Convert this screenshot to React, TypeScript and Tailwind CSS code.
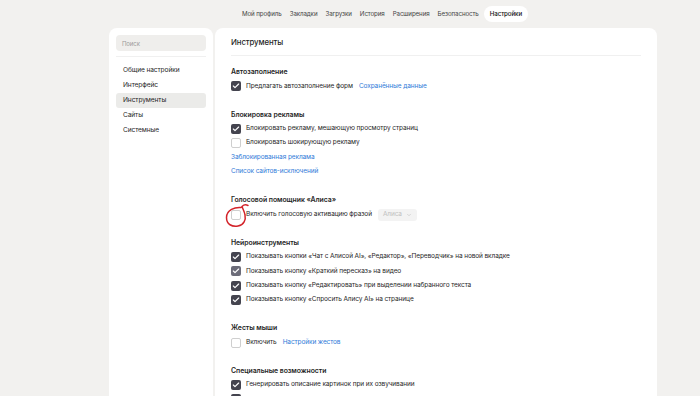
import { Check, ChevronDown } from "lucide-react"

const nav = ["Мой профиль", "Закладки", "Загрузки", "История", "Расширения", "Безопасность", "Настройки"]
const side = ["Общие настройки", "Интерфейс", "Инструменты", "Сайты", "Системные"]

function Box({ on, light }: { on: boolean; light?: boolean }) {
  if (on)
    return (
      <span className={`flex h-[10px] w-[10px] shrink-0 items-center justify-center rounded-[2px] ${light ? "bg-[#6c6c79]" : "bg-[#44444f]"}`}>
        <Check className="h-[8px] w-[8px] text-white" strokeWidth={3.5} />
      </span>
    )
  return <span className="h-[10px] w-[10px] shrink-0 rounded-[2px] border border-[#cfcfcf] bg-white" />
}

function Row({ on, light, text, link, children }: { on: boolean; light?: boolean; text: string; link?: string; children?: React.ReactNode }) {
  return (
    <div className="flex h-[14.3px] items-center gap-[5px]">
      <Box on={on} light={light} />
      <span>{text}</span>
      {link && <span className="ml-[1px] text-[#2f7ad8]">{link}</span>}
      {children}
    </div>
  )
}

function Section({ title, children }: { title: string; children: React.ReactNode }) {
  return (
    <div>
      <div className="flex h-[14.3px] items-center text-[6.9px] font-semibold tracking-[-0.05px]">{title}</div>
      {children}
    </div>
  )
}

function Link({ text }: { text: string }) {
  return <div className="flex h-[14.3px] items-center text-[#2f7ad8]">{text}</div>
}

export default function App() {
  return (
    <div className="h-[396px] w-[700px] overflow-hidden bg-[#f2f1ef] text-[6.5px] tracking-[-0.1px] text-[#1f1f1f]" style={{ fontFamily: "Inter, 'Noto Sans', sans-serif" }}>
      <div className="flex h-[28px] items-center justify-center pl-[66px]">
        <div className="flex items-center text-[6.2px]">
          {nav.map((n) => (
            <span
              key={n}
              className={`rounded-full px-[4px] py-[3.5px] ${n === "Настройки" ? "ml-[1px] bg-white px-[6px] font-medium text-[#111]" : "text-[#444]"}`}
            >
              {n}
            </span>
          ))}
        </div>
      </div>

      <div className="flex gap-[2px] pl-[109px]">
        <div className="h-[400px] w-[104px] rounded-t-[8px] bg-white px-[7px] pt-[7px]">
          <div className="flex h-[16px] items-center rounded-[4px] bg-[#efeeec] px-[6px] text-[6px] text-[#9a9a9a]">Поиск</div>
          <div className="mt-[5px] border-t border-[#f0f0f0]" />
          <div className="mt-[6px] text-[6.6px]">
            {side.map((s) => (
              <div key={s} className={`flex h-[15px] items-center rounded-[3px] px-[7px] ${s === "Инструменты" ? "bg-[#ebebe9]" : ""}`}>
                {s}
              </div>
            ))}
          </div>
        </div>

        <div className="relative h-[400px] w-[442px] rounded-t-[8px] bg-white px-[16px]">
          <div className="flex h-[28px] items-center border-b border-[#f0f0f0] pt-[2px] text-[7.8px] font-medium">Инструменты</div>
          <div className="flex flex-col gap-[14px] pt-[9px]">
            <Section title="Автозаполнение">
              <Row on text="Предлагать автозаполнение форм" link="Сохранённые данные" />
            </Section>
            <Section title="Блокировка рекламы">
              <Row on text="Блокировать рекламу, мешающую просмотру страниц" />
              <Row on={false} text="Блокировать шокирующую рекламу" />
              <Link text="Заблокированная реклама" />
              <Link text="Список сайтов-исключений" />
            </Section>
            <Section title="Голосовой помощник «Алиса»">
              <Row on={false} text="Включить голосовую активацию фразой">
                <span className="ml-[1px] flex h-[12px] items-center gap-[4px] rounded-[3px] bg-[#f3f3f3] px-[5px] text-[#c0c0c0]">
                  Алиса
                  <ChevronDown className="h-[6px] w-[6px]" strokeWidth={2.5} />
                </span>
              </Row>
            </Section>
            <Section title="Нейроинструменты">
              <Row on text="Показывать кнопки «Чат с Алисой AI», «Редактор», «Переводчик» на новой вкладке" />
              <Row on light text="Показывать кнопку «Краткий пересказ» на видео" />
              <Row on text="Показывать кнопку «Редактировать» при выделении набранного текста" />
              <Row on text="Показывать кнопку «Спросить Алису AI» на странице" />
            </Section>
            <Section title="Жесты мыши">
              <Row on={false} text="Включить" link="Настройки жестов" />
            </Section>
            <Section title="Специальные возможности">
              <Row on text="Генерировать описание картинок при их озвучивании" />
              <Row on text="" />
            </Section>
          </div>
          <svg className="pointer-events-none absolute left-[8px] top-[174px]" width="32" height="32" viewBox="0 0 32 32" fill="none">
            <path
              d="M18 5.5 C12 5 3.5 7.5 3.5 15.5 C3.5 22.5 9 25 15 24 C21 23 23 17.5 22 13 C21.5 9.5 20 7.5 19 4.5 C20.5 3 23 2.5 25 3.5"
              stroke="#d3232a"
              strokeWidth="1.5"
              strokeLinecap="round"
            />
          </svg>
        </div>
      </div>
    </div>
  )
}
